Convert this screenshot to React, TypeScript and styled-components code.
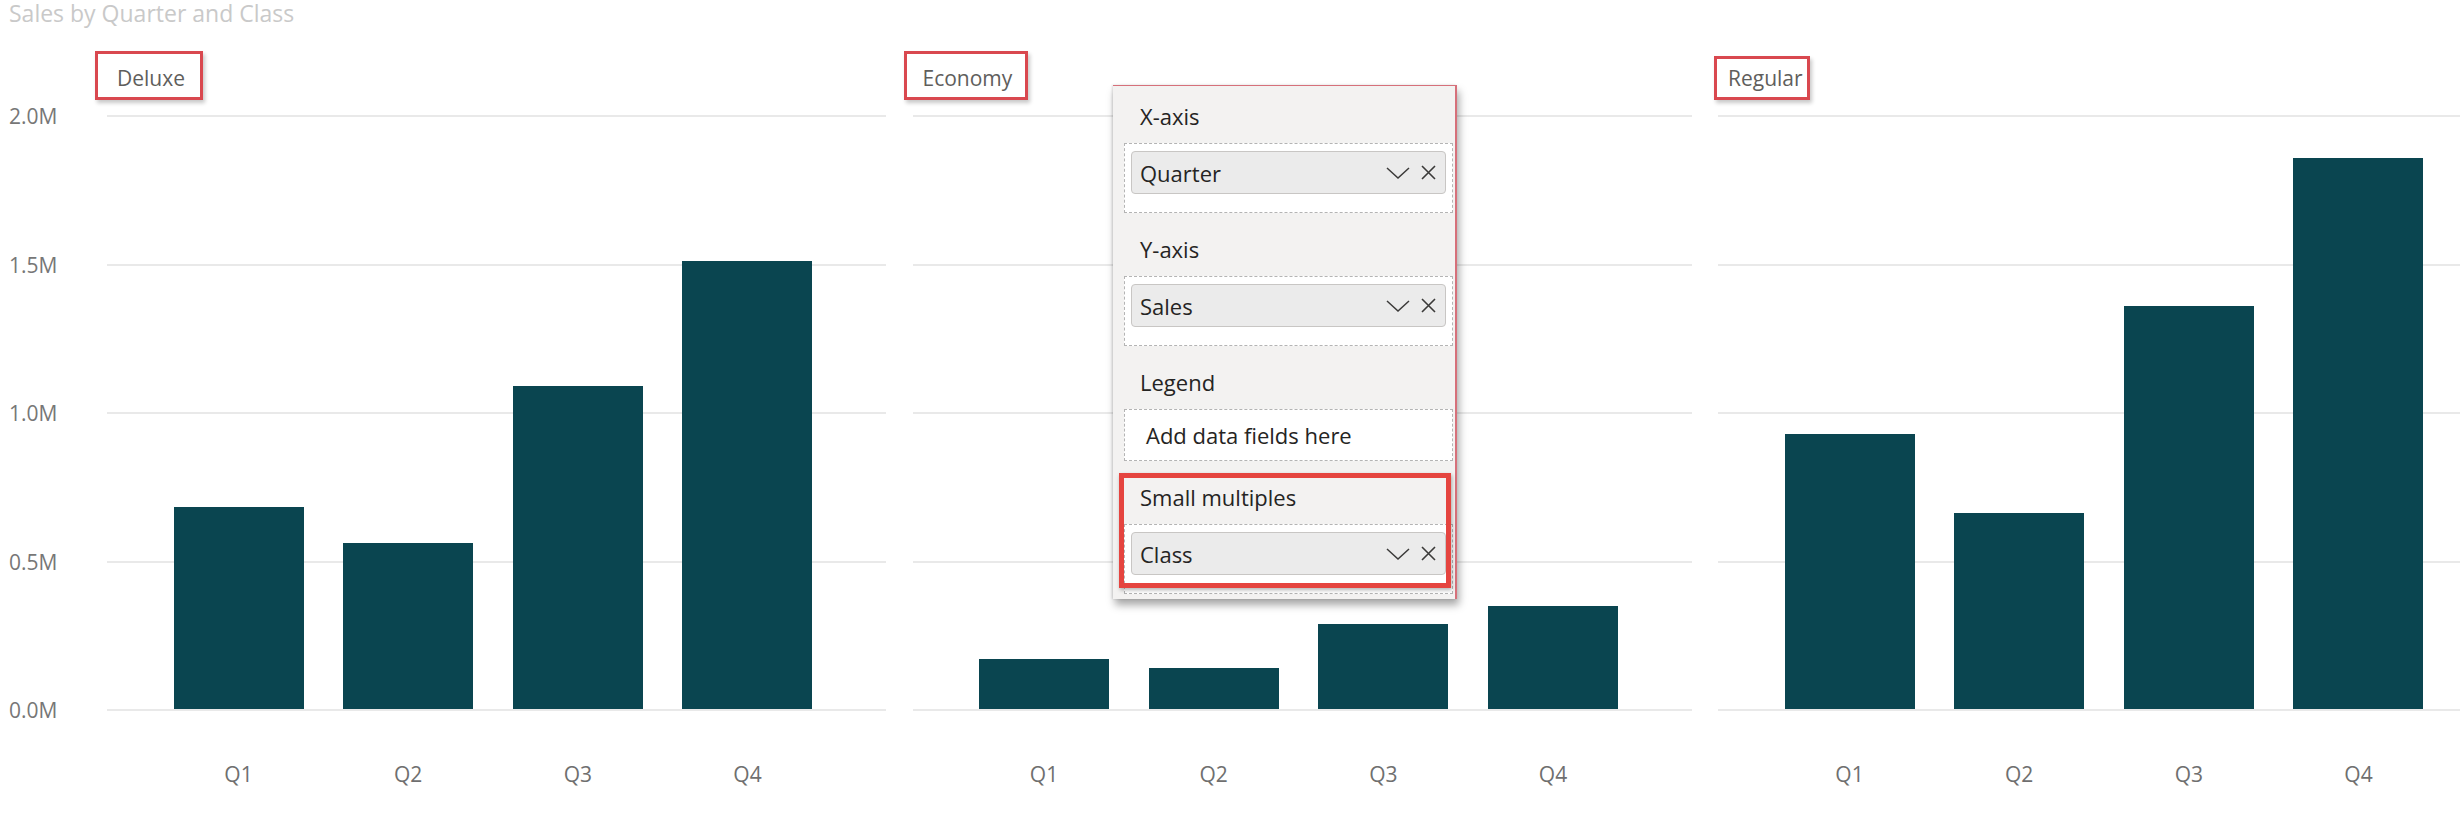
import React from 'react'
import styled, { createGlobalStyle } from 'styled-components'

interface IPanel {
  name: string
  values: number[]
  box: { left: number; top: number; width: number; height: number }
}

const quarters = ['Q1', 'Q2', 'Q3', 'Q4']
const ticks = ['2.0M', '1.5M', '1.0M', '0.5M', '0.0M']
const PX_PER_M = 296.5

const panels: IPanel[] = [
  { name: 'Deluxe', values: [0.681, 0.56, 1.089, 1.511], box: { left: -12, top: 23, width: 108, height: 49 } },
  { name: 'Economy', values: [0.169, 0.138, 0.287, 0.347], box: { left: -9, top: 23, width: 124, height: 49 } },
  { name: 'Regular', values: [0.927, 0.661, 1.359, 1.858], box: { left: -4, top: 28, width: 96, height: 44 } },
]

const wells = [
  { label: 'X-axis', field: 'Quarter' },
  { label: 'Y-axis', field: 'Sales' },
  { label: 'Legend', field: null },
]

const Chevron = () => (
  <svg width="24" height="12" viewBox="0 0 24 12" fill="none">
    <polyline points="1,1 12,11 23,1" stroke="#3b3a39" strokeWidth="1.5" />
  </svg>
)

const Close = () => (
  <svg width="15" height="15" viewBox="0 0 15 15" fill="none">
    <path d="M1 1L14 14M14 1L1 14" stroke="#3b3a39" strokeWidth="1.6" />
  </svg>
)

const FieldPill: React.FC<{ name: string }> = ({ name }) => (
  <StyledPill>
    <span className="name">{name}</span>
    <Chevron />
    <Close />
  </StyledPill>
)

export default function App() {
  return (
    <>
      <GlobalStyle />
      <StyledPage>
        <StyledTitle>Sales by Quarter and Class</StyledTitle>
        <StyledRegion>
          <StyledYAxis>
            {ticks.map((t) => (
              <span key={t}>{t}</span>
            ))}
          </StyledYAxis>
          <StyledPanels>
            {panels.map((p) => (
              <StyledPanel key={p.name}>
                <StyledPanelHeader>{p.name}</StyledPanelHeader>
                <StyledAnnotation
                  $left={p.box.left}
                  $top={p.box.top}
                  $width={p.box.width}
                  $height={p.box.height}
                />
                <StyledPlot>
                  <StyledGrid>
                    {ticks.map((t) => (
                      <i key={t} />
                    ))}
                  </StyledGrid>
                  <StyledBars>
                    {p.values.map((v, i) => (
                      <StyledBar key={quarters[i]} style={{ height: `${v * PX_PER_M}px` }} />
                    ))}
                  </StyledBars>
                </StyledPlot>
                <StyledXAxis>
                  {quarters.map((q) => (
                    <span key={q}>{q}</span>
                  ))}
                </StyledXAxis>
              </StyledPanel>
            ))}
          </StyledPanels>
        </StyledRegion>

        <StyledFieldsPane>
          {wells.map(({ label, field }) => (
            <StyledSection key={label}>
              <StyledSectionLabel>{label}</StyledSectionLabel>
              {field ? (
                <StyledWell>
                  <FieldPill name={field} />
                </StyledWell>
              ) : (
                <StyledEmptyWell>Add data fields here</StyledEmptyWell>
              )}
            </StyledSection>
          ))}
          <StyledSection>
            <StyledHighlight />
            <StyledSectionLabel>Small multiples</StyledSectionLabel>
            <StyledWell>
              <FieldPill name="Class" />
            </StyledWell>
          </StyledSection>
        </StyledFieldsPane>
      </StyledPage>
    </>
  )
}

const GlobalStyle = createGlobalStyle`
  html, body {
    margin: 0;
    padding: 0;
    background: #fff;
  }

  body {
    font-family: "Open Sans", "Noto Sans", sans-serif;
  }
`

const StyledPage = styled.div`
  height: 820px;
  overflow: hidden;
  position: relative;
  width: 2460px;
`

const StyledTitle = styled.div`
  color: #c9c9c9;
  font-size: 23px;
  height: 28px;
  line-height: 26px;
  padding-left: 9px;
`

const StyledRegion = styled.div`
  display: flex;
`

const StyledYAxis = styled.div`
  box-sizing: border-box;
  color: #777;
  display: flex;
  flex: 0 0 107px;
  flex-direction: column;
  font-size: 21px;
  height: 622px;
  justify-content: space-between;
  line-height: 28px;
  margin-top: 74px;
  padding-left: 9px;
`

const StyledPanels = styled.div`
  column-gap: 26.5px;
  display: grid;
  grid-template-columns: repeat(3, 779px);
`

const StyledPanel = styled.div`
  display: flex;
  flex-direction: column;
  position: relative;
`

const StyledPanelHeader = styled.div`
  color: #605e5c;
  font-size: 21px;
  height: 51px;
  line-height: 28px;
  padding: 36px 0 0 10px;
`

const StyledAnnotation = styled.div<{ $left: number; $top: number; $width: number; $height: number }>`
  border: 3px solid #d9484f;
  box-shadow: 2px 3px 4px rgba(0, 0, 0, 0.22);
  box-sizing: border-box;
  height: ${(p) => p.$height}px;
  left: ${(p) => p.$left}px;
  position: absolute;
  top: ${(p) => p.$top}px;
  width: ${(p) => p.$width}px;
`

const StyledPlot = styled.div`
  height: 596px;
  position: relative;
`

const StyledGrid = styled.div`
  display: flex;
  flex-direction: column;
  height: 100%;
  justify-content: space-between;

  i {
    background: #e9e9e9;
    display: block;
    height: 2px;
  }
`

const StyledBars = styled.div`
  align-items: flex-end;
  bottom: 2px;
  display: flex;
  gap: 39.67px;
  left: 0;
  padding-left: 66.5px;
  position: absolute;
  right: 0;
  top: 0;
`

const StyledBar = styled.div`
  background: #0a4550;
  flex: 0 0 130px;
`

const StyledXAxis = styled.div`
  color: #6f6f6f;
  display: flex;
  font-size: 21px;
  gap: 39.67px;
  line-height: 28px;
  margin-top: 49px;
  padding-left: 66.5px;

  span {
    flex: 0 0 130px;
    text-align: center;
  }
`

const StyledFieldsPane = styled.div`
  background: #f3f2f1;
  border-right: 2px solid #d6707a;
  border-top: 1px solid #d6707a;
  box-shadow: -1px 0 2px rgba(0, 0, 0, 0.12), 2px 6px 8px rgba(0, 0, 0, 0.35);
  box-sizing: border-box;
  color: #252423;
  display: flex;
  flex-direction: column;
  font-size: 22px;
  gap: 22px;
  height: 514px;
  left: 1113px;
  padding: 16px 2px 0 11px;
  position: absolute;
  top: 85px;
  width: 344px;
`

const StyledSection = styled.div`
  display: flex;
  flex-direction: column;
  position: relative;
`

const StyledSectionLabel = styled.div`
  line-height: 28px;
  margin-bottom: 13px;
  padding-left: 16px;
`

const StyledWell = styled.div`
  background: #fff;
  border: 1px dashed #b4b4b4;
  padding: 7px 6px 18px;
`

const StyledEmptyWell = styled.div`
  align-items: center;
  background: #fff;
  border: 1px dashed #b4b4b4;
  display: flex;
  height: 50px;
  padding-left: 21px;
`

const StyledPill = styled.div`
  align-items: center;
  background: #ebebeb;
  border: 1px solid #c8c6c4;
  border-radius: 4px;
  box-sizing: border-box;
  display: flex;
  gap: 11px;
  height: 43px;
  padding: 0 9px 0 8px;

  .name {
    flex: 1;
  }
`

const StyledHighlight = styled.div`
  border: 5px solid #e5443f;
  box-shadow: 1px 2px 4px rgba(0, 0, 0, 0.3);
  box-sizing: border-box;
  height: 115px;
  left: -5px;
  pointer-events: none;
  position: absolute;
  top: -10px;
  width: 332px;
  z-index: 1;
`
